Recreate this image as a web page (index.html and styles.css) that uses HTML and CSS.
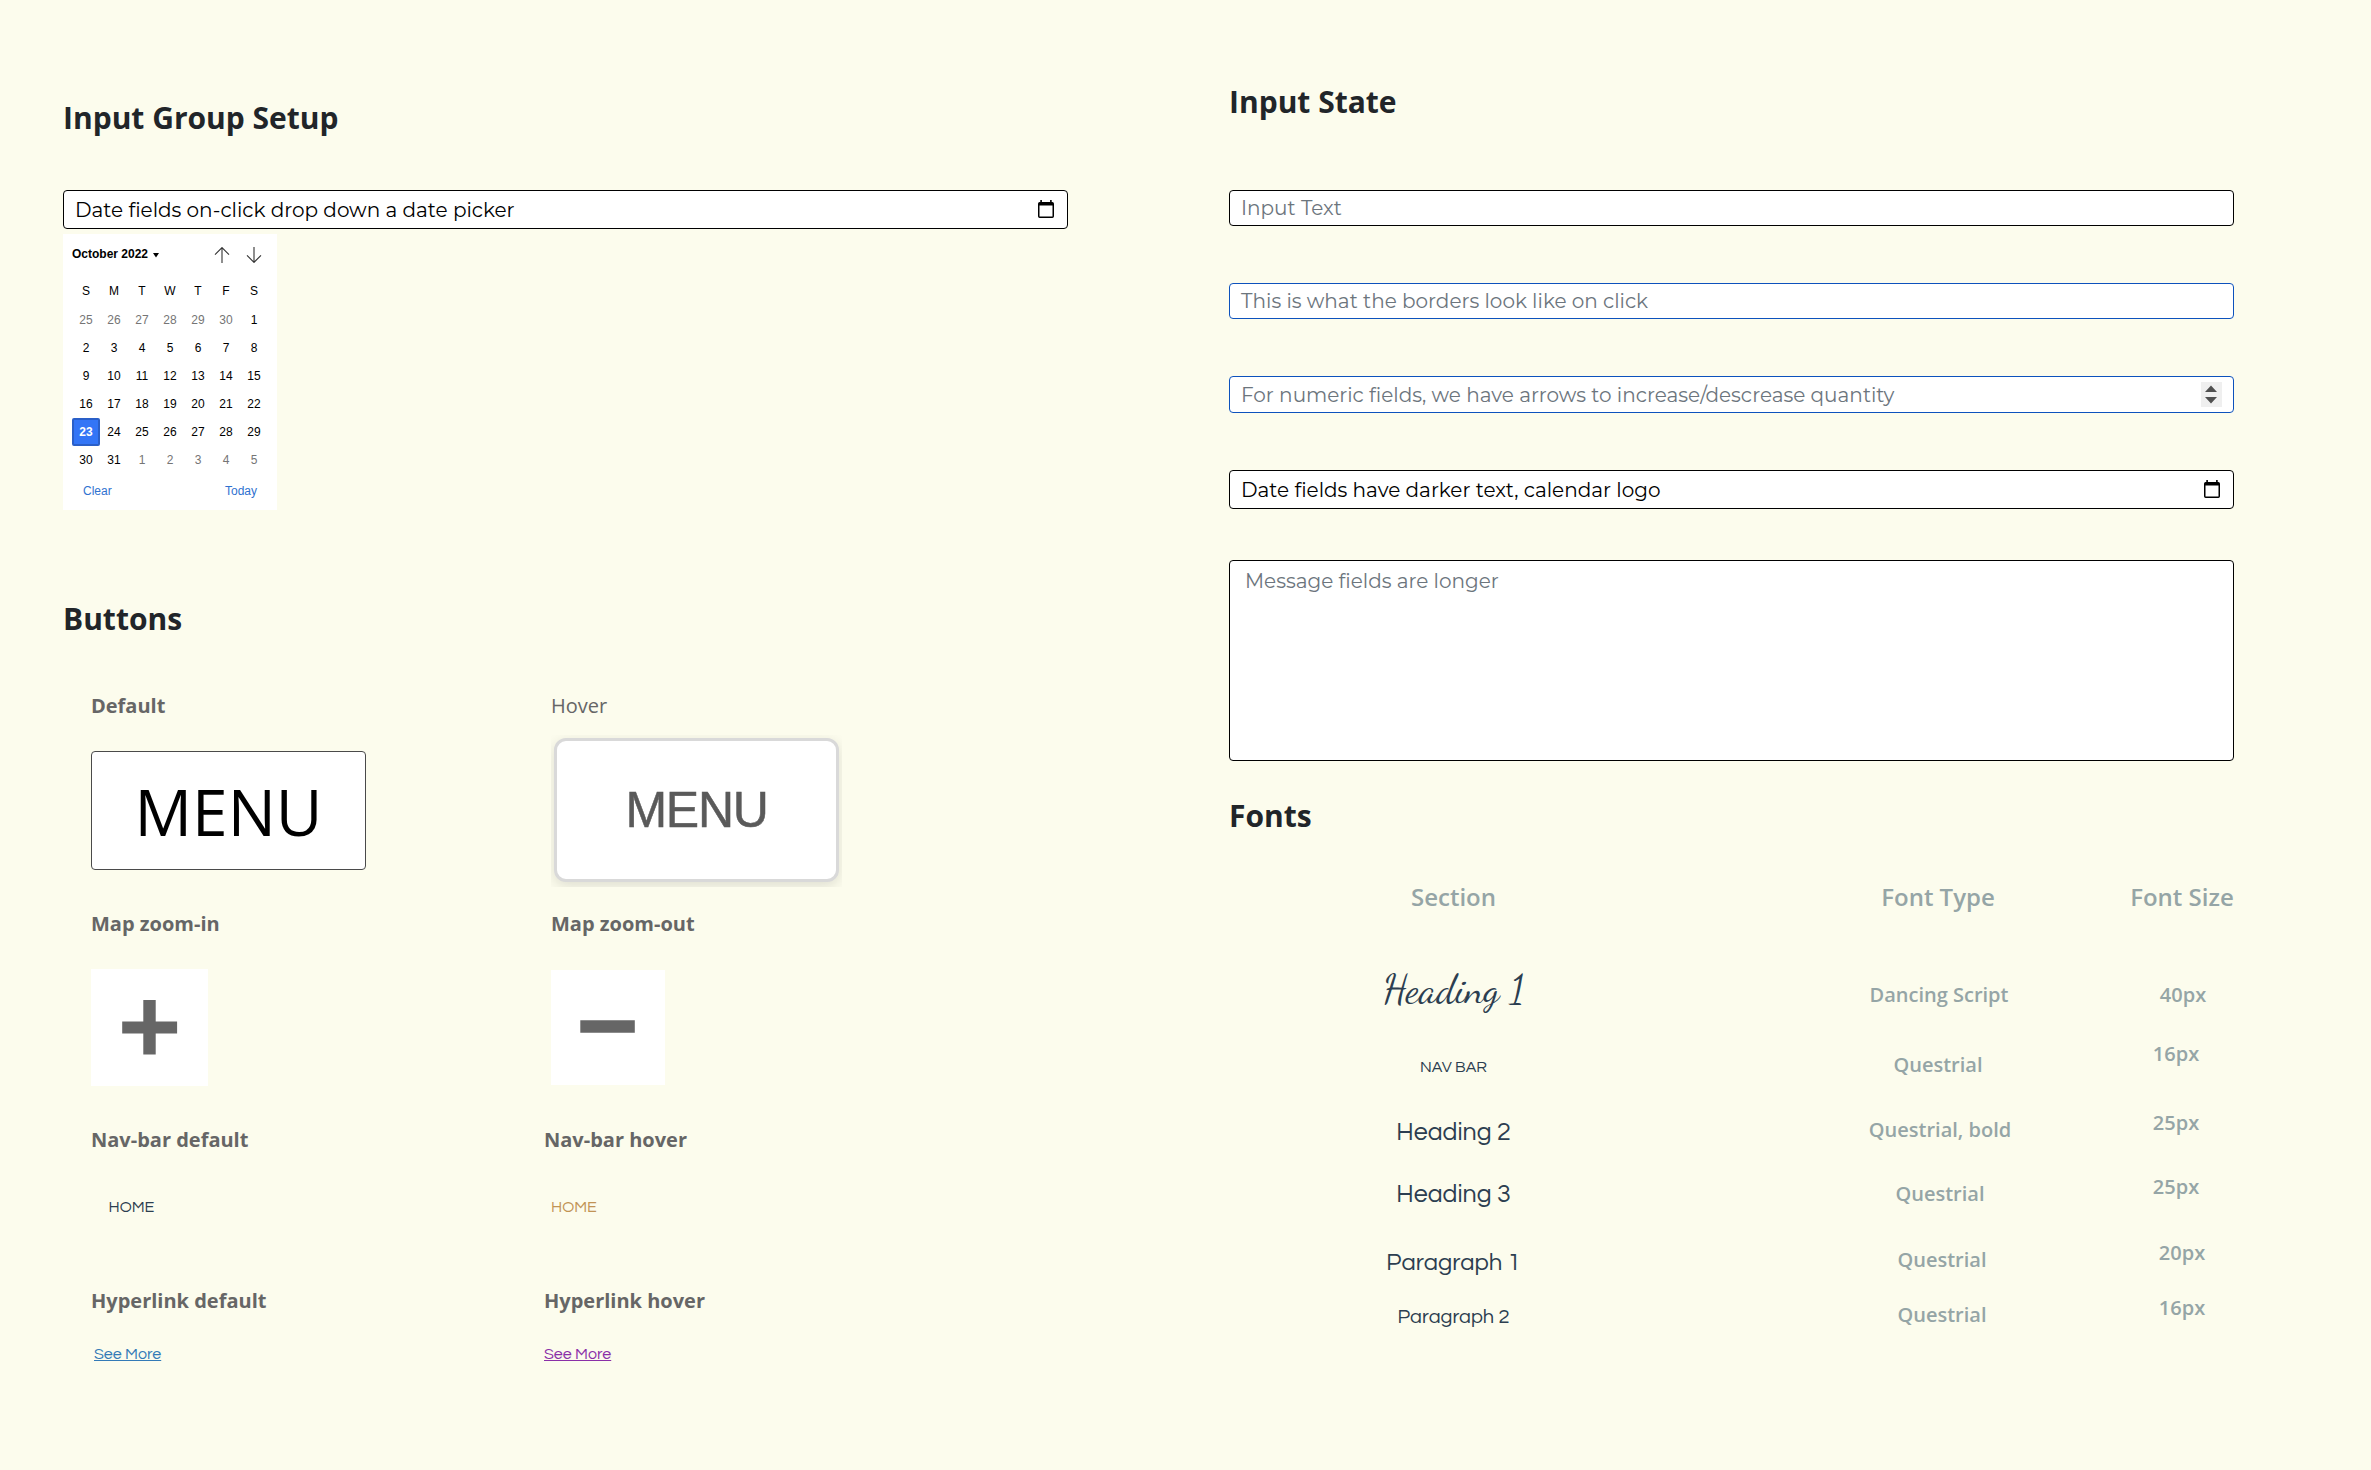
FILE: index.html
```html
<!DOCTYPE html>
<html lang="en">
<head>
<meta charset="utf-8">
<title>Style guide</title>
<link rel="stylesheet" href="styles.css">
</head>
<body>
<main class="sheet">
  <section class="column column-left">
    <h2 class="title">Input Group Setup</h2>
    <div class="field field-date field-group">
      <span>Date fields on-click drop down a date picker</span>
      <svg class="icon-calendar" viewBox="0 0 16 19"><path d="M2.300 0h1.600v2h8.200V0h1.600v2h.6A1.700 1.700 0 0 1 16 3.700v12.600a1.700 1.700 0 0 1-1.700 1.700H1.700A1.700 1.700 0 0 1 0 16.300V3.700A1.700 1.700 0 0 1 1.700 2h.6zM1.500 5.600v10.800h13V5.600z"/></svg>
    </div>
    <div class="calendar">
      <div class="calendar-head">
        <span class="calendar-month">October 2022</span>
        <svg class="caret" viewBox="0 0 6 5"><path d="M0 0h6L3 4.500z"/></svg>
        <svg class="arrow arrow-up" viewBox="0 0 16 16"><path d="M8 .6v15.400M1 7.600l7-7 7 7"/></svg>
        <svg class="arrow" viewBox="0 0 16 16"><path d="M8 0v15.400M1 8.400l7 7 7-7"/></svg>
      </div>
      <div class="calendar-grid calendar-days">
        <span>S</span><span>M</span><span>T</span><span>W</span><span>T</span><span>F</span><span>S</span>
      </div>
      <div class="calendar-grid">
        <span class="muted">25</span><span class="muted">26</span><span class="muted">27</span><span class="muted">28</span><span class="muted">29</span><span class="muted">30</span><span>1</span>
        <span>2</span><span>3</span><span>4</span><span>5</span><span>6</span><span>7</span><span>8</span>
        <span>9</span><span>10</span><span>11</span><span>12</span><span>13</span><span>14</span><span>15</span>
        <span>16</span><span>17</span><span>18</span><span>19</span><span>20</span><span>21</span><span>22</span>
        <span class="selected">23</span><span>24</span><span>25</span><span>26</span><span>27</span><span>28</span><span>29</span>
        <span>30</span><span>31</span><span class="muted">1</span><span class="muted">2</span><span class="muted">3</span><span class="muted">4</span><span class="muted">5</span>
      </div>
      <div class="calendar-foot"><span>Clear</span><span>Today</span></div>
    </div>

    <h2 class="title title-buttons">Buttons</h2>
    <div class="buttons">
      <div class="stack stack-default">
        <h3 class="label">Default</h3>
        <div class="menu">MENU</div>
        <h3 class="label">Map zoom-in</h3>
        <div class="zoom zoom-in"><svg viewBox="0 0 117 117"><path d="M52.300 31h12.400v21.500h21.400v12H64.700V85.500H52.300v-21H31.200v-12h21.100z"/></svg></div>
        <h3 class="label">Nav-bar default</h3>
        <a class="nav">HOME</a>
        <h3 class="label">Hyperlink default</h3>
        <a class="link">See More</a>
      </div>
      <div class="stack stack-hover">
        <h3 class="label label-light">Hover</h3>
        <div class="menu-hover"><div class="menu-face">MENU</div></div>
        <h3 class="label">Map zoom-out</h3>
        <div class="zoom zoom-out"><svg viewBox="0 0 114 115"><path d="M29.300 50.300h54.500v12.400H29.300z"/></svg></div>
        <h3 class="label label-out">Nav-bar hover</h3>
        <a class="nav">HOME</a>
        <h3 class="label label-out">Hyperlink hover</h3>
        <a class="link">See More</a>
      </div>
    </div>
  </section>

  <section class="column column-right">
    <h2 class="title">Input State</h2>
    <div class="field"><span>Input Text</span></div>
    <div class="field field-focus"><span>This is what the borders look like on click</span></div>
    <div class="field field-focus field-number">
      <span>For numeric fields, we have arrows to increase/descrease quantity</span>
      <svg class="spinner" viewBox="0 0 21 25"><path d="M4 10l6-6.500L16 10zM4 15l6 6.500L16 15z"/></svg>
    </div>
    <div class="field field-date">
      <span>Date fields have darker text, calendar logo</span>
      <svg class="icon-calendar" viewBox="0 0 16 19"><path d="M2.300 0h1.600v2h8.200V0h1.600v2h.6A1.700 1.700 0 0 1 16 3.700v12.600a1.700 1.700 0 0 1-1.700 1.700H1.700A1.700 1.700 0 0 1 0 16.300V3.700A1.700 1.700 0 0 1 1.700 2h.6zM1.500 5.600v10.800h13V5.600z"/></svg>
    </div>
    <div class="field field-message"><span>Message fields are longer</span></div>

    <h2 class="title title-fonts">Fonts</h2>
    <div class="fonts">
      <div class="fonts-col fonts-section">
        <h4>Section</h4>
        <p class="sample-script">Heading 1</p>
        <p class="sample-nav">NAV BAR</p>
        <p class="sample-h2">Heading 2</p>
        <p class="sample-h3">Heading 3</p>
        <p class="sample-p1">Paragraph 1</p>
        <p class="sample-p2">Paragraph 2</p>
      </div>
      <div class="fonts-col fonts-type">
        <h4>Font Type</h4>
        <p>Dancing Script</p>
        <p>Questrial</p>
        <p>Questrial, bold</p>
        <p>Questrial</p>
        <p>Questrial</p>
        <p>Questrial</p>
      </div>
      <div class="fonts-col fonts-size">
        <h4>Font Size</h4>
        <p>40px</p>
        <p>16px</p>
        <p>25px</p>
        <p>25px</p>
        <p>20px</p>
        <p>16px</p>
      </div>
    </div>
  </section>
</main>
</body>
</html>
```
FILE: styles.css
```css
*{box-sizing:border-box}
body{margin:0;background:#fcfced;color:#212529;font-family:"Open Sans","Noto Sans",sans-serif;font-size:20px}
h2,h3,h4,p{margin:0}
.sheet{display:flex;align-items:flex-start;gap:161px;width:2371px;height:1470px;padding-left:63px;overflow:hidden}
.column{width:1005px;display:flex;flex-direction:column}
.column-left{padding-top:98px}
.column-right{padding-top:82px}
.title{font-size:30px;line-height:40px;font-weight:700;white-space:nowrap}

/* form fields */
.field{height:36px;margin-top:57px;padding:0 11px;border:1px solid #000;border-radius:4px;background:#fff;color:#6c757d;font-family:Montserrat,Lato,sans-serif;font-size:20px;line-height:34px;display:flex;align-items:center;justify-content:space-between;white-space:nowrap}
.title + .field{margin-top:68px}
.title + .field-group{margin-top:52px}
.field-focus{border-color:#0d52bd}
.field-number{height:37px}
.field-date{height:39px;color:#000}
.field-message{height:201px;margin-top:51px;padding:3px 15px;align-items:flex-start}
.icon-calendar{width:16px;height:19px;margin-right:2px}
.spinner{width:21px;height:25px;background:#efefef;fill:#505050}

/* date picker */
.calendar{width:214px;height:276px;margin-top:5px;padding:0 9px;background:#fff;color:#000;font-family:"Liberation Sans",Arial,sans-serif;font-size:12px}
.calendar-head{display:flex;align-items:center;height:42px}
.calendar-month{padding-bottom:2px;font-weight:700}
.caret{width:6px;height:5px;margin-left:5px}
.arrow{width:16px;height:16px;margin-left:16px;fill:none;stroke:#333;stroke-width:1.1}
.arrow-up{margin-left:55px}
.calendar-grid{display:grid;grid-template-columns:repeat(7,28px);grid-auto-rows:28px;line-height:28px;text-align:center}
.calendar-days{padding:1px 0}
.muted{color:#757575}
.selected{background:#3375f6;color:#fff;font-weight:700;border:2px solid #2a5fc8;border-radius:2px;line-height:24px}
.calendar-foot{display:flex;justify-content:space-between;padding:7px 11px 0;color:#2f72d0;line-height:20px}

/* buttons */
.title-buttons{margin-top:89px}
.buttons{display:flex;padding:53px 0 0 28px}
.stack{display:flex;flex-direction:column;align-items:flex-start;width:460px}
.label{font-size:20px;line-height:28px;font-weight:700;color:#666}
.label-light{font-weight:400}
.menu{width:275px;height:119px;margin:31px 0 40px;border:1px solid #4a4a4a;border-radius:4px;background:#fff;color:#000;font-size:64px;line-height:119px;text-align:center}
.menu-hover{width:291px;height:152px;margin:15px 0 23px;padding:3px;overflow:hidden}
.menu-face{width:285px;height:144px;border:3px solid #d9d9d9;border-radius:12px;background:#fff;color:#5a5a5a;box-shadow:0 4px 14px rgba(0,0,0,.12);font-family:"Liberation Sans",Arial,sans-serif;font-size:50px;line-height:138px;text-align:center;letter-spacing:-1.3px;-webkit-text-stroke:.5px #5a5a5a}
.zoom{background:#fff;fill:#666}
.zoom svg{display:block}
.zoom-in{width:117px;height:117px;margin:31px 0 40px}
.zoom-out{width:114px;height:115px;margin:32px 0 41px}
.nav,.link{font-family:Questrial,Lato,sans-serif;font-size:16px;line-height:20px}
.nav{margin:43px 0 70px;color:#2c3e50}
.stack-default .nav{margin-left:17.5px}
.stack-hover .nav{color:#c19355}
.link{margin-top:29px;color:#337ab7;text-decoration:underline}
.stack-default .link{margin-left:3px}
.stack-hover .link{margin-left:-7px;color:#8a2fa8}
.label-out{margin-left:-7px}

/* font table */
.title-fonts{margin-top:35px}
.fonts{display:flex;padding:45px 0 0 144px}
.fonts-col{display:flex;flex-direction:column;align-items:center;white-space:nowrap;color:#95a5a6;font-weight:600;line-height:28px}
.fonts-col h4{font-size:24px;line-height:32px;font-weight:600}
.fonts-section{width:161px}
.fonts-type{width:160px;margin-left:324px}
.fonts-size{width:104px;margin-left:112px}
.fonts-section p{font-family:Questrial,Lato,sans-serif;font-weight:400;color:#2c3e50}
.fonts-section .sample-script{margin-top:62px;font-family:"Dancing Script",cursive;font-size:40px}
.fonts-section .sample-nav{margin-top:50px;font-size:16px}
.fonts-section .sample-h2,.fonts-section .sample-h3{margin-top:37px;font-size:25px}
.fonts-section .sample-h3{margin-top:34px}
.fonts-section .sample-p1{margin-top:41px;font-size:24px}
.fonts-section .sample-p2{margin-top:26px;font-size:20px}
.fonts-type p:nth-child(2){margin-top:68px;padding-left:2px}
.fonts-type p:nth-child(3){margin-top:42px}
.fonts-type p:nth-child(4){margin-top:37px;padding-left:4px}
.fonts-type p:nth-child(5){margin-top:36px;padding-left:4px}
.fonts-type p:nth-child(6){margin-top:38px;padding-left:8px}
.fonts-type p:nth-child(7){margin-top:27px;padding-left:8px}
.fonts-size p:nth-child(2){margin-top:68px;padding-left:2px}
.fonts-size p:nth-child(3){margin-top:31px;padding-right:12px}
.fonts-size p:nth-child(4){margin-top:41px;padding-right:12px}
.fonts-size p:nth-child(5){margin-top:36px;padding-right:12px}
.fonts-size p:nth-child(6){margin-top:38px}
.fonts-size p:nth-child(7){margin-top:27px}
```
